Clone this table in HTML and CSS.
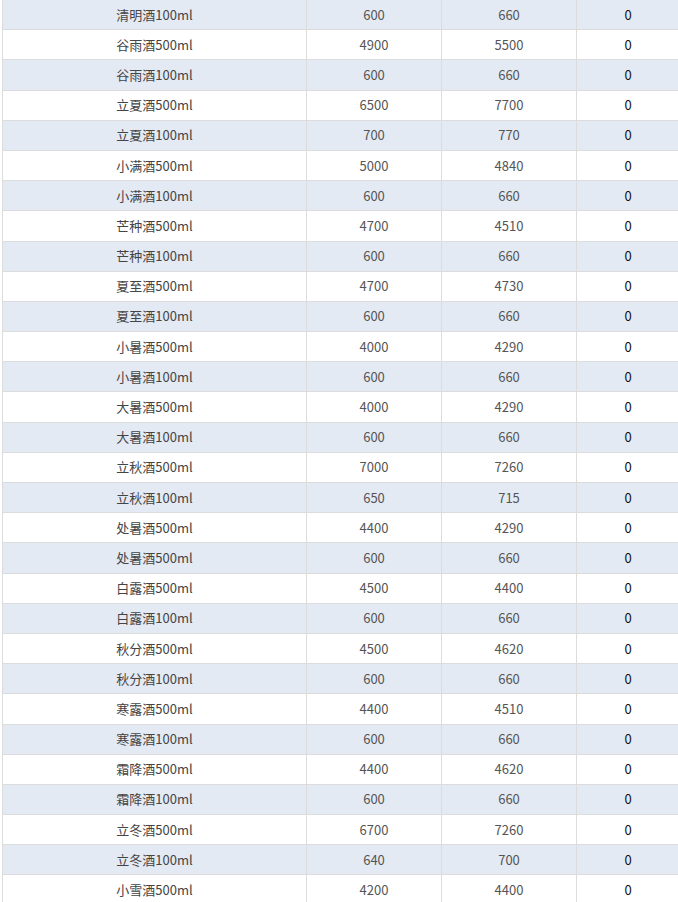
FILE: index.html
```html
<!DOCTYPE html>
<html lang="zh-CN">
<head>
<meta charset="utf-8">
<title>酒品价格表</title>
<link rel="stylesheet" href="styles.css">
</head>
<body>
<table class="price-table">
<colgroup>
<col class="c-name"><col class="c-num"><col class="c-num"><col class="c-zero">
</colgroup>
<tbody>
<tr class="alt"><td>清明酒100ml</td><td>600</td><td>660</td><td class="z">0</td></tr>
<tr><td>谷雨酒500ml</td><td>4900</td><td>5500</td><td class="z">0</td></tr>
<tr class="alt"><td>谷雨酒100ml</td><td>600</td><td>660</td><td class="z">0</td></tr>
<tr><td>立夏酒500ml</td><td>6500</td><td>7700</td><td class="z">0</td></tr>
<tr class="alt"><td>立夏酒100ml</td><td>700</td><td>770</td><td class="z">0</td></tr>
<tr><td>小满酒500ml</td><td>5000</td><td>4840</td><td class="z">0</td></tr>
<tr class="alt"><td>小满酒100ml</td><td>600</td><td>660</td><td class="z">0</td></tr>
<tr><td>芒种酒500ml</td><td>4700</td><td>4510</td><td class="z">0</td></tr>
<tr class="alt"><td>芒种酒100ml</td><td>600</td><td>660</td><td class="z">0</td></tr>
<tr><td>夏至酒500ml</td><td>4700</td><td>4730</td><td class="z">0</td></tr>
<tr class="alt"><td>夏至酒100ml</td><td>600</td><td>660</td><td class="z">0</td></tr>
<tr><td>小暑酒500ml</td><td>4000</td><td>4290</td><td class="z">0</td></tr>
<tr class="alt"><td>小暑酒100ml</td><td>600</td><td>660</td><td class="z">0</td></tr>
<tr><td>大暑酒500ml</td><td>4000</td><td>4290</td><td class="z">0</td></tr>
<tr class="alt"><td>大暑酒100ml</td><td>600</td><td>660</td><td class="z">0</td></tr>
<tr><td>立秋酒500ml</td><td>7000</td><td>7260</td><td class="z">0</td></tr>
<tr class="alt"><td>立秋酒100ml</td><td>650</td><td>715</td><td class="z">0</td></tr>
<tr><td>处暑酒500ml</td><td>4400</td><td>4290</td><td class="z">0</td></tr>
<tr class="alt"><td>处暑酒500ml</td><td>600</td><td>660</td><td class="z">0</td></tr>
<tr><td>白露酒500ml</td><td>4500</td><td>4400</td><td class="z">0</td></tr>
<tr class="alt"><td>白露酒100ml</td><td>600</td><td>660</td><td class="z">0</td></tr>
<tr><td>秋分酒500ml</td><td>4500</td><td>4620</td><td class="z">0</td></tr>
<tr class="alt"><td>秋分酒100ml</td><td>600</td><td>660</td><td class="z">0</td></tr>
<tr><td>寒露酒500ml</td><td>4400</td><td>4510</td><td class="z">0</td></tr>
<tr class="alt"><td>寒露酒100ml</td><td>600</td><td>660</td><td class="z">0</td></tr>
<tr><td>霜降酒500ml</td><td>4400</td><td>4620</td><td class="z">0</td></tr>
<tr class="alt"><td>霜降酒100ml</td><td>600</td><td>660</td><td class="z">0</td></tr>
<tr><td>立冬酒500ml</td><td>6700</td><td>7260</td><td class="z">0</td></tr>
<tr class="alt"><td>立冬酒100ml</td><td>640</td><td>700</td><td class="z">0</td></tr>
<tr><td>小雪酒500ml</td><td>4200</td><td>4400</td><td class="z">0</td></tr>
</tbody>
</table>
</body>
</html>
```
FILE: styles.css
```css
html, body {
  margin: 0;
  padding: 0;
  background: #fff;
  overflow: hidden;
}
body {
  font-family: "Noto Sans CJK SC", "Noto Sans", sans-serif;
  font-size: 13px;
  color: #555;
}
.price-table {
  border-collapse: collapse;
  table-layout: fixed;
  width: 677px;
  margin: -1px 0 0 2px;
}
.c-name { width: 304px; }
.c-num { width: 135px; }
.c-zero { width: 103px; }
.price-table td {
  border: 1px solid #dcdcdc;
  height: 30.2px;
  padding: 0;
  line-height: 18px;
  text-align: center;
  vertical-align: middle;
  box-sizing: border-box;
}
.price-table tr.alt td {
  background: #e4eaf4;
}
.price-table td:first-child {
  color: #444;
}
.price-table td.z {
  color: #111;
}
```
